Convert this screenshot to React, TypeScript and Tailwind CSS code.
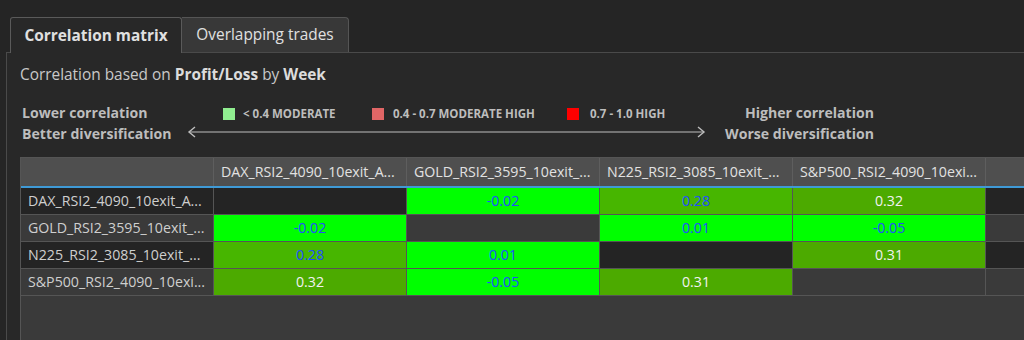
import React from "react";

const names = [
  "DAX_RSI2_4090_10exit_A...",
  "GOLD_RSI2_3595_10exit_...",
  "N225_RSI2_3085_10exit_...",
  "S&P500_RSI2_4090_10exi...",
];

type Cell = { v: string; kind: "bright" | "mid1" | "mid2" | "diag" };

const data: Cell[][] = [
  [
    { v: "", kind: "diag" },
    { v: "-0.02", kind: "bright" },
    { v: "0.28", kind: "mid1" },
    { v: "0.32", kind: "mid2" },
  ],
  [
    { v: "-0.02", kind: "bright" },
    { v: "", kind: "diag" },
    { v: "0.01", kind: "bright" },
    { v: "-0.05", kind: "bright" },
  ],
  [
    { v: "0.28", kind: "mid1" },
    { v: "0.01", kind: "bright" },
    { v: "", kind: "diag" },
    { v: "0.31", kind: "mid2" },
  ],
  [
    { v: "0.32", kind: "mid2" },
    { v: "-0.05", kind: "bright" },
    { v: "0.31", kind: "mid2" },
    { v: "", kind: "diag" },
  ],
];

function cellClass(c: Cell, dark: boolean) {
  if (c.kind === "bright") return "bg-[#00ff00] text-[#1f4fff]";
  if (c.kind === "mid1") return "bg-[#47b600] text-[#1f4fff]";
  if (c.kind === "mid2") return "bg-[#4caa00] text-[#f2f2f2]";
  return dark ? "bg-[#242424]" : "bg-[#3a3a3a]";
}

export default function App() {
  return (
    <div className="w-[1024px] h-[340px] overflow-hidden bg-[#252525] pt-[17px] font-['Open_Sans',sans-serif] text-[#cfcfcf]">
      {/* Tabs */}
      <div className="flex pl-[10px] relative z-10">
        <div className="w-[172px] h-[36px] -mb-px border border-b-0 border-[#5a5a5a] rounded-t-[3px] bg-[#282828] flex items-center justify-center font-bold text-[15.4px] text-[#e0e0e0]">
          Correlation matrix
        </div>
        <div className="w-[167px] h-[35px] border-t border-r border-[#555] rounded-tr-[4px] bg-[#383838] flex items-center justify-center text-[15.4px] text-[#e0e0e0]">
          Overlapping trades
        </div>
      </div>

      {/* Panel */}
      <div className="ml-[6px] h-[289px] border-l border-t border-[#4a4a4a] bg-[#282828] pl-[13px] flex flex-col">
        <div className="pt-[12px] h-[34px] text-[15.4px] leading-[20px] text-[#c8c8c8] whitespace-nowrap">
          Correlation based on <span className="font-bold text-[#dcdcdc]">Profit/Loss</span> by{" "}
          <span className="font-bold text-[#dcdcdc]">Week</span>
        </div>

        {/* Legend */}
        <div className="flex pl-[2px] mt-[15px] h-[42px] text-[#bdbdbd]">
          <div className="w-[164px] text-[14.1px] font-bold leading-[21px] whitespace-nowrap">
            <div>Lower correlation</div>
            <div>Better diversification</div>
          </div>
          <div className="w-[521px] flex flex-col">
            <div className="h-[24px] flex items-center text-[11.5px] font-bold whitespace-nowrap">
              <div className="ml-[37px] w-[149px] flex items-center">
                <div className="w-[12px] h-[12px] bg-[#90ee90]" />
                <span className="ml-[8px]">&lt; 0.4 MODERATE</span>
              </div>
              <div className="w-[195px] flex items-center">
                <div className="w-[12px] h-[12px] bg-[#e06666]" />
                <span className="ml-[9px]">0.4 - 0.7 MODERATE HIGH</span>
              </div>
              <div className="flex items-center">
                <div className="w-[12px] h-[12px] bg-[#ff0000]" />
                <span className="ml-[11px]">0.7 - 1.0 HIGH</span>
              </div>
            </div>
            <svg width="521" height="12" viewBox="0 0 521 12" className="block">
              <line x1="3" y1="6" x2="518" y2="6" stroke="#bdbdbd" strokeWidth="1.2" />
              <polyline points="9,1 3,6 9,11" fill="none" stroke="#bdbdbd" strokeWidth="1.4" />
              <polyline points="512,1 518,6 512,11" fill="none" stroke="#bdbdbd" strokeWidth="1.4" />
            </svg>
          </div>
          <div className="w-[167px] text-right text-[14.1px] font-bold leading-[21px] whitespace-nowrap">
            <div>Higher correlation</div>
            <div>Worse diversification</div>
          </div>
        </div>

        {/* Table */}
        <div className="mt-[13px] flex-1 border-l border-t border-[#555] bg-[#3a3a3a] text-[14.2px]">
          <div className="flex h-[28px] bg-[#4f4f4f] text-[#e2e2e2]">
            <div className="w-[193px] border-r border-[#5e5e5e]" />
            {names.map((n) => (
              <div key={n} className="w-[193px] border-r border-[#5e5e5e] pl-[7px] flex items-center whitespace-nowrap overflow-hidden">
                {n}
              </div>
            ))}
            <div className="flex-1" />
          </div>
          <div className="h-[2px] bg-[#3f9ad6]" />
          {data.map((row, i) => {
            const dark = i % 2 === 0;
            const base = dark ? "bg-[#242424]" : "bg-[#3a3a3a]";
            return (
              <div key={i} className="flex h-[27px] border-b border-[#555]">
                <div className={`w-[193px] border-r border-[#555] pl-[7px] flex items-center whitespace-nowrap overflow-hidden text-[#cfcfcf] ${base}`}>
                  {names[i]}
                </div>
                {row.map((c, j) => (
                  <div key={j} className={`w-[193px] border-r border-[#555] flex items-center justify-center ${cellClass(c, dark)}`}>
                    {c.v}
                  </div>
                ))}
                <div className={`flex-1 ${base}`} />
              </div>
            );
          })}
        </div>
      </div>
    </div>
  );
}
